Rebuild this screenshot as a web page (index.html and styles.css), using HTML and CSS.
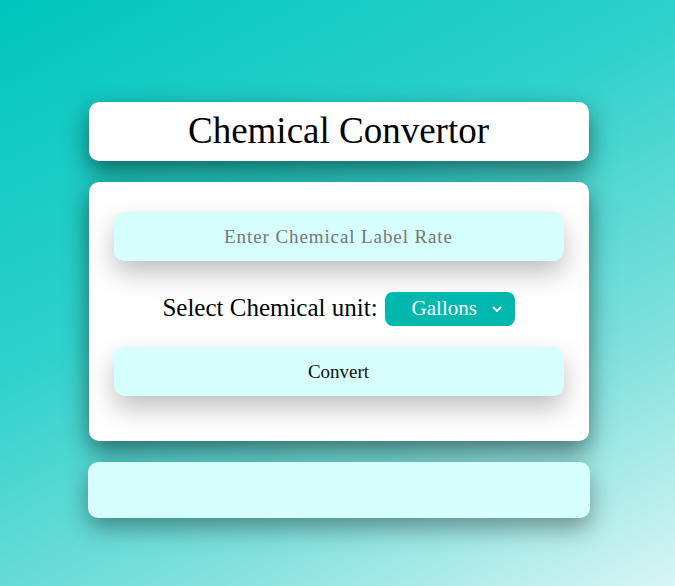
FILE: index.html
```html
<!DOCTYPE html>
<html>
<head>
<meta charset="utf-8">
<link rel="stylesheet" href="styles.css">
</head>
<body>
<div class="page">
  <header class="card title-card">
    <h1 class="title">Chemical Convertor</h1>
  </header>
  <main class="card form-card">
    <input class="field" type="text" placeholder="Enter Chemical Label Rate">
    <div class="unit-row">
      <label class="unit-label" for="unit">Select Chemical unit:</label>
      <span class="select-wrap">
        <select class="unit-select" id="unit">
          <option>Gallons</option>
          <option>Liters</option>
        </select>
        <svg class="chevron" width="10" height="7" viewBox="0 0 10 7"><path d="M1.5 1.5 L5 5 L8.5 1.5" fill="none" stroke="#fff" stroke-width="1.8" stroke-linecap="round" stroke-linejoin="round"/></svg>
      </span>
    </div>
    <button class="field convert">Convert</button>
  </main>
  <section class="result"></section>
</div>
</body>
</html>
```
FILE: styles.css
```css
html, body {
  margin: 0;
  height: 100%;
}
body {
  background: linear-gradient(152deg, #00c6bd 0%, #2fd1cb 40%, #7fe0dc 72%, #d8f6f5 100%);
  font-family: "Liberation Serif", "Times New Roman", serif;
  color: #000;
  overflow: hidden;
}
.page {
  display: flex;
  flex-direction: column;
  align-items: center;
  padding-top: 102px;
  padding-left: 2px;
  gap: 21px;
}
.card {
  width: 500px;
  background: #fff;
  border-radius: 10px;
  box-shadow: 0 10px 24px rgba(0, 0, 0, 0.5);
  box-sizing: border-box;
}
.title-card {
  height: 59px;
  display: flex;
  align-items: center;
  justify-content: center;
}
.title {
  margin: 0;
  font-weight: normal;
  font-size: 37px;
  line-height: 1;
  padding-bottom: 2px;
}
.form-card {
  height: 259px;
  padding: 30px 25px 0;
  display: flex;
  flex-direction: column;
  align-items: center;
}
.field {
  width: 450px;
  height: 49px;
  border: none;
  border-radius: 10px;
  background: #d6fefd;
  box-shadow: 0 12px 26px rgba(0, 0, 0, 0.25);
  font-family: "Liberation Serif", "Times New Roman", serif;
  text-align: center;
  outline: none;
  box-sizing: border-box;
  display: block;
}
input.field {
  font-size: 19px;
  letter-spacing: 0.9px;
  padding-top: 2px;
}
input.field::placeholder {
  color: #777;
}
.unit-row {
  display: flex;
  align-items: center;
  justify-content: center;
  gap: 7px;
  margin-top: 31px;
  height: 34px;
}
.unit-label {
  font-size: 25px;
  padding-bottom: 2px;
}
.select-wrap {
  position: relative;
  display: block;
}
.unit-select {
  appearance: none;
  -webkit-appearance: none;
  width: 130px;
  height: 34px;
  border: none;
  border-radius: 8px;
  background: #00b8ad;
  color: #fff;
  font-family: "Liberation Serif", "Times New Roman", serif;
  font-size: 21px;
  padding: 0 0 2px 27px;
  outline: none;
  display: block;
}
.chevron {
  position: absolute;
  right: 13px;
  top: 14px;
  pointer-events: none;
}
.convert {
  margin-top: 21px;
  font-size: 19px;
  color: #111;
  cursor: pointer;
  padding-top: 2px;
}
.result {
  width: 502px;
  height: 56px;
  background: #d6fefd;
  border-radius: 10px;
  box-shadow: 0 10px 24px rgba(0, 0, 0, 0.38);
}
```
